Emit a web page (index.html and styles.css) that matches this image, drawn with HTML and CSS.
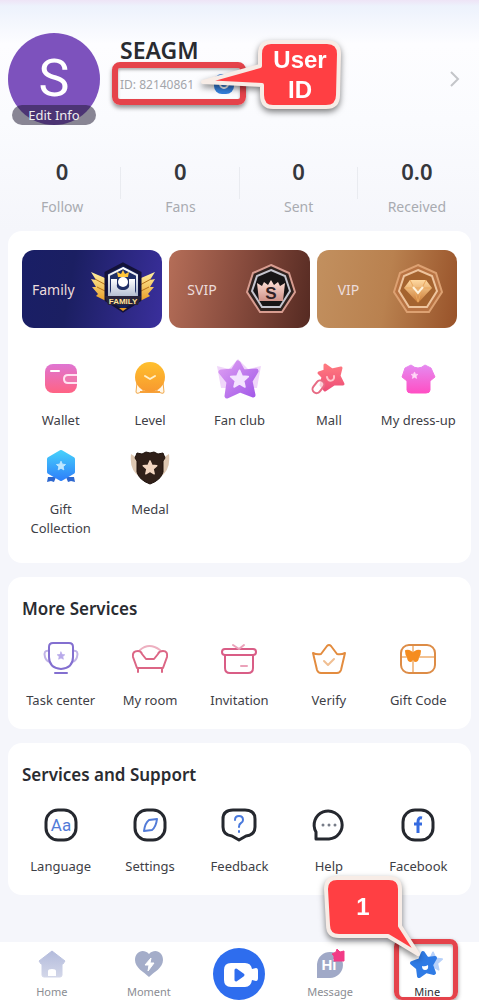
FILE: index.html
```
<!DOCTYPE html>
<html lang="en">
<head>
    <meta charset="UTF-8">
    <meta name="viewport" content="width=device-width, initial-scale=1.0">
    <title>Mine</title>
    <link rel="stylesheet" href="styles.css">
</head>
<body>

    <!-- shared shapes and gradients -->
    <svg class="defs" width="0" height="0" aria-hidden="true">
        <defs>
            <symbol id="star" viewBox="0 0 40 40">
                <path d="M20 4l4.4 9.9 10.8 1.2-8.1 7.2 2.3 10.6-9.4-5.4-9.4 5.4 2.3-10.6-8.1-7.2 10.8-1.2z" fill="currentColor" stroke="currentColor" stroke-width="3" stroke-linejoin="round"/>
            </symbol>
            <linearGradient id="gWallet" x2="0" y2="1"><stop stop-color="#df75d2"/><stop offset="1" stop-color="#ff6384"/></linearGradient>
            <linearGradient id="gLevel" x2="0" y2="1"><stop stop-color="#ffc02e"/><stop offset="1" stop-color="#f8992f"/></linearGradient>
            <linearGradient id="gFan" x2="1" y2="1"><stop stop-color="#dc9cf2"/><stop offset="1" stop-color="#a35ae8"/></linearGradient>
            <linearGradient id="gMall" x2="0" y2="1"><stop stop-color="#ff7a80"/><stop offset="1" stop-color="#ee4f78"/></linearGradient>
            <linearGradient id="gDress" x2="0" y2="1"><stop stop-color="#e58af0"/><stop offset="1" stop-color="#ff4fc4"/></linearGradient>
            <linearGradient id="gGift" x2="0" y2="1"><stop stop-color="#45cdfb"/><stop offset="1" stop-color="#2f83fa"/></linearGradient>
            <linearGradient id="gGold" x2="0" y2="1"><stop stop-color="#fff0a0"/><stop offset="1" stop-color="#e79a22"/></linearGradient>
            <linearGradient id="gSilver" x2="0" y2="1"><stop stop-color="#ffffff"/><stop offset="1" stop-color="#a9b4cb"/></linearGradient>
            <linearGradient id="gRose" x2="0" y2="1"><stop stop-color="#ffe3da"/><stop offset="1" stop-color="#cf9288"/></linearGradient>
            <linearGradient id="gGem" x2="0" y2="1"><stop stop-color="#ffd9a0"/><stop offset="1" stop-color="#c97a35"/></linearGradient>
            <linearGradient id="gHome" x2="0" y2="1"><stop stop-color="#b3bbdc"/><stop offset="1" stop-color="#d3d7e9"/></linearGradient>
        </defs>
    </svg>

    <header class="profile">
        <a class="avatar" href="#">
            <span class="letter">S</span>
            <span class="edit">Edit Info</span>
        </a>
        <div class="info">
            <h1 class="name">SEAGM</h1>
            <div class="userid">
                <span>ID: 82140861</span>
                <button class="copy" type="button" aria-label="Copy ID">
                    <svg width="20" height="20" viewBox="0 0 20 20"><rect width="20" height="20" rx="8" fill="#347fdc"/><path d="M6 7v3a4 4 0 0 0 8 0V7" fill="none" stroke="#fff" stroke-width="2"/></svg>
                </button>
                <div class="callout callout-id">
                    <svg width="160" height="90" viewBox="0 0 160 90" aria-hidden="true">
                        <path d="M70 8h56q12 0 12 12l-1 41q0 12-12 12H72q-11 0-11-12V51L2 48l57-16V20q0-12 11-12z" fill="#ff3f43" stroke="#f7ece6" stroke-width="4" stroke-linejoin="round"/>
                    </svg>
                    <strong>User<br>ID</strong>
                </div>
            </div>
        </div>
        <a class="more" href="#" aria-label="Profile">
            <svg width="12" height="20" viewBox="0 0 12 20"><path d="M2 3l7 7-7 7" fill="none" stroke="#c3c5c9" stroke-width="2"/></svg>
        </a>
    </header>

    <ul class="stats">
        <li><b>0</b><span>Follow</span></li>
        <li><b>0</b><span>Fans</span></li>
        <li><b>0</b><span>Sent</span></li>
        <li><b>0.0</b><span>Received</span></li>
    </ul>

    <main>
        <section class="card first">
            <div class="banners">
                <a class="banner family" href="#">
                    <span>Family</span>
                    <svg width="66" height="54" viewBox="0 0 66 54" aria-hidden="true">
                        <path d="M1 10l14 6 3 24-12-6 2-2-6-7 4 0-5-8 5 1zM65 10l-14 6-3 24 12-6-2-2 6-7-4 0 5-8-5 1z" fill="url(#gGold)"/>
                        <path d="M5 17l11 6M7 25l10 5M61 17l-11 6M59 25l-10 5" stroke="#b56f19"/>
                        <path d="M33 2l17 9v27L33 49 16 38V11z" fill="#14205a" stroke="#131238" stroke-width="3"/>
                        <path d="M33 6l14 7v21H19V13z" fill="#1f2f66" stroke="url(#gSilver)" stroke-width="2"/>
                        <path d="M21 17h6v5c-2 8 14 8 12 0v-5h6v12l3 8H18l3-8z" fill="url(#gSilver)"/>
                        <circle cx="33" cy="20" r="5" fill="#fff"/>
                        <path d="M28 15l-1-5 4 2 2-4 2 4 4-2-1 5z" fill="#ffc73c"/>
                        <path d="M15 34h36l-3 9H18z" fill="#282339"/>
                        <path d="M29 46h8l-4 3z" fill="#e79a22"/>
                        <text x="33" y="42" text-anchor="middle" class="badge-text" fill="#ffe29b">FAMILY</text>
                    </svg>
                </a>
                <a class="banner svip" href="#">
                    <span>SVIP</span>
                    <svg width="54" height="54" viewBox="0 0 54 54" aria-hidden="true">
                        <path d="M27 3l18 8 6 19-13 20H16L3 30l6-19z" fill="#31231f" stroke="#d79c90" stroke-width="2"/>
                        <path d="M27 8l14 6 5 15-10 16H18L8 29l5-15z" fill="#171516" stroke="#c5c5ce" stroke-width="2"/>
                        <path d="M15 39l-2-18 5 3 2-4 4 3 3-5 3 5 4-3 2 4 5-3-2 18z" fill="url(#gRose)"/>
                        <text x="27" y="37" text-anchor="middle" class="badge-s" fill="#302125">S</text>
                    </svg>
                </a>
                <a class="banner vip" href="#">
                    <span>VIP</span>
                    <svg width="54" height="54" viewBox="0 0 54 54" aria-hidden="true">
                        <path d="M27 3l18 8 6 19-13 20H16L3 30l6-19z" fill="#b87343" stroke="#dda172" stroke-width="2"/>
                        <path d="M27 8l14 6 5 15-10 16H18L8 29l5-15z" fill="#a4632f" stroke="#eec49d" stroke-width="2"/>
                        <path d="M19 18h16l6 8-14 15-14-15z" fill="url(#gGem)"/>
                        <path d="M14 26h26M19 18l4 8 4 14 4-14 4-8" fill="none" stroke="#e9a65d"/>
                        <path d="M22 25l5 6 5-6" fill="none" stroke="#fff3dc" stroke-width="2"/>
                    </svg>
                </a>
            </div>

            <nav class="grid">
                <a class="item" href="#">
                    <svg class="icon" viewBox="0 0 40 40"><rect x="4" y="5" width="32" height="29" rx="8" fill="url(#gWallet)"/><path d="M10 12h8" stroke="#fff" stroke-width="2" stroke-linecap="round"/><path d="M36 16H27q-4 0-4 4t4 4h9" fill="#ee78b0" stroke="#ffe3f1" stroke-width="2"/></svg>
                    <span>Wallet</span>
                </a>
                <a class="item" href="#">
                    <svg class="icon" viewBox="0 0 40 40"><path d="M7 23l-1 10q0 2 3 1l5-3zM33 23l1 10q0 2-3 1l-5-3z" fill="#fff7e9" stroke="#f2a94c" stroke-linejoin="round"/><path d="M10 33h20" stroke="#f7a23a" stroke-width="2"/><circle cx="20" cy="18" r="15" fill="url(#gLevel)"/><path d="M15 17l5 3 5-3" fill="none" stroke="#fff0c8" stroke-width="2" stroke-linecap="round" stroke-linejoin="round"/></svg>
                    <span>Level</span>
                </a>
                <a class="item" href="#">
                    <svg class="icon icon-wide" viewBox="0 0 48 40"><path d="M2 7l12 3 9-10 10 10 13-3-4 22-36 0z" fill="#f0d6fa"/><path d="M23 4l5 9 13-1-6 10 3 14-13-5-13 6 2-14-8-10 12-1z" fill="url(#gFan)" stroke="url(#gFan)" stroke-width="5" stroke-linejoin="round"/><g color="#f4e4ff"><use href="#star" x="13" y="9" width="23" height="23"/></g></svg>
                    <span>Fan club</span>
                </a>
                <a class="item" href="#">
                    <svg class="icon" viewBox="0 0 40 40"><path d="M16 6l7 5 9-2-2 8 4 8-9 0-9 6-4-5 2-8-4-4 6-2z" fill="url(#gMall)" stroke="url(#gMall)" stroke-width="3" stroke-linejoin="round"/><path d="M18 18c1 6 8 4 7-1" fill="none" stroke="#ffc4cb" stroke-width="2" stroke-linecap="round"/><rect x="6" y="21" width="8" height="14" rx="4" transform="rotate(38 10 27)" fill="#fff" fill-opacity=".7" stroke="#e76b84" stroke-width="2"/></svg>
                    <span>Mall</span>
                </a>
                <a class="item" href="#">
                    <svg class="icon" viewBox="0 0 40 40"><path d="M13 6q7 6 14 0l6 3 4 9-5 4v9q0 3-4 3H13q-4 0-4-3v-9l-5-4 3-9z" fill="url(#gDress)" stroke="url(#gDress)" stroke-linejoin="round"/><g color="#ffd9f7"><use href="#star" x="12" y="12" width="9" height="9"/></g></svg>
                    <span>My dress-up</span>
                </a>
                <a class="item" href="#">
                    <svg class="icon" viewBox="0 0 40 40"><path d="M7 29h8l-2 5-3-1-4 1zM33 29h-8l2 5 3-1 4 1z" fill="#2d67cf"/><path d="M20 4l12 7v13l-12 7-12-7V11z" fill="url(#gGift)" stroke="url(#gGift)" stroke-width="4" stroke-linejoin="round"/><g color="#bfe8ff"><use href="#star" x="14" y="12" width="12" height="12"/></g></svg>
                    <span>Gift Collection</span>
                </a>
                <a class="item" href="#">
                    <svg class="icon" viewBox="0 0 40 40"><path d="M1 6q6 4 8 5l1 18Q-1 22 1 6zM39 6q-6 4-8 5l-1 18Q41 22 39 6z" fill="#dfc8b2"/><path d="M7 5l5 1 4-2 4 1 4-1 4 2 5-1 2 5-2 3v11q-2 8-13 12Q9 32 7 24V13l-2-3z" fill="#302019" stroke="#20130d" stroke-linejoin="round"/><g color="#f3d6c1"><use href="#star" x="11" y="11" width="18" height="18"/></g></svg>
                    <span>Medal</span>
                </a>
            </nav>
        </section>

        <section class="card">
            <h2>More Services</h2>
            <nav class="grid">
                <a class="item" href="#">
                    <svg class="icon line" viewBox="0 0 40 40" stroke="#836fd0"><path d="M8 12q-6-1-4 6 1 4 5 5M32 12q6-1 4 6-1 4-5 5" stroke="#c0b3e7"/><path d="M12 4h16q4 0 4 4v10q0 11-12 12Q8 29 8 18V8q0-4 4-4zM14 34h12"/><g color="#b8a9ea"><use href="#star" x="15" y="12" width="10" height="10" stroke="none"/></g></svg>
                    <span>Task center</span>
                </a>
                <a class="item" href="#">
                    <svg class="icon line" viewBox="0 0 40 40" stroke="#dc6685"><path d="M10 11q9-8 20 0" stroke="#edb0c0"/><path d="M7 29L3 18q-1-6 5-6 3 0 4 3l4 5h8l4-5q1-3 5-3 5 0 4 6l-4 11zM8 29v4M32 29v4"/></svg>
                    <span>My room</span>
                </a>
                <a class="item" href="#">
                    <svg class="icon line" viewBox="0 0 40 40" stroke="#d95d86"><rect x="3" y="10" width="34" height="6" rx="3"/><path d="M6 16v13q0 5 5 5h18q5 0 5-5V16"/><path d="M14 6l6 4 5-4M22 27h6" stroke="#eba2ba"/></svg>
                    <span>Invitation</span>
                </a>
                <a class="item" href="#">
                    <svg class="icon line" viewBox="0 0 40 40" stroke="#e38c3f"><path d="M4 14q4 2 8 1l6-8q2-2 4 0l6 8q4 1 8-1l-4 17q-1 3-4 3H12q-3 0-4-3z"/><path d="M15 22l4 4 6-6" stroke="#f0bf93"/></svg>
                    <span>Verify</span>
                </a>
                <a class="item" href="#">
                    <svg class="icon line" viewBox="0 0 40 40" stroke="#dd8c46"><path d="M15 6v27M3 18h34" stroke="#f2c292"/><rect x="3" y="6" width="34" height="28" rx="8"/><path d="M15 15q-3-4-7-3 0 4 2 6 0 4 3 4l2-3 2 3q3 0 3-4 2-2 2-6-4-1-7 3z" fill="#f58d20" stroke="#f58d20"/></svg>
                    <span>Gift Code</span>
                </a>
            </nav>
        </section>

        <section class="card">
            <h2>Services and Support</h2>
            <nav class="grid">
                <a class="item" href="#">
                    <svg class="icon line dark" viewBox="0 0 40 40"><rect x="5" y="5" width="30" height="30" rx="12"/><text x="20" y="26" text-anchor="middle" class="glyph-aa">Aa</text></svg>
                    <span>Language</span>
                </a>
                <a class="item" href="#">
                    <svg class="icon line dark" viewBox="0 0 40 40"><rect x="5" y="5" width="30" height="30" rx="12"/><path d="M27 14l-8 1q-4 3-5 11l8-1q4-3 5-11z" stroke="#527bd8" stroke-width="2"/></svg>
                    <span>Settings</span>
                </a>
                <a class="item" href="#">
                    <svg class="icon line dark" viewBox="0 0 40 40"><path d="M14 5h12q10 0 10 9v8q0 8-9 9l-7 4-7-4q-9-1-9-9v-8q0-9 10-9z"/><path d="M16 15q0-4 4-4t4 4q0 2-2 3-2 1-2 4M20 26v1" stroke="#4979dc" stroke-width="2"/></svg>
                    <span>Feedback</span>
                </a>
                <a class="item" href="#">
                    <svg class="icon line dark" viewBox="0 0 40 40"><path d="M7 34v-7A14 14 0 1 1 20 34z"/><g fill="#777c88" stroke="none"><circle cx="14" cy="20" r="1.5"/><circle cx="20" cy="20" r="1.5"/><circle cx="26" cy="20" r="1.5"/></g></svg>
                    <span>Help</span>
                </a>
                <a class="item" href="#">
                    <svg class="icon line dark" viewBox="0 0 40 40"><rect x="5" y="5" width="30" height="30" rx="12"/><path d="M24 13q-4-1-4 4v11M16 19h8" stroke="#356be0" stroke-width="3" stroke-linecap="butt"/></svg>
                    <span>Facebook</span>
                </a>
            </nav>
        </section>
    </main>

    <nav class="tabbar">
        <a class="tab" href="#">
            <svg width="32" height="32" viewBox="0 0 32 32"><path d="M16 3l13 10-2 3h-1v11q0 2-2 2H8q-2 0-2-2V16H5l-2-3z" fill="url(#gHome)" stroke="url(#gHome)" stroke-linejoin="round"/><path d="M12 28v-5q0-2 4-2t4 2v5z" fill="#fff"/></svg>
            <span>Home</span>
        </a>
        <a class="tab" href="#">
            <svg width="32" height="32" viewBox="0 0 32 32"><path d="M16 6C10 0 2 4 2 12c0 8 9 12 14 17 5-5 14-9 14-17C30 4 22 0 16 6z" fill="#a4adc9"/><path d="M18 10l-6 7h4l-1 6 6-8h-4z" fill="#fff" stroke="#fff" stroke-linejoin="round"/></svg>
            <span>Moment</span>
        </a>
        <a class="live" href="#" aria-label="Go live">
            <svg width="52" height="52" viewBox="0 0 52 52"><circle cx="26" cy="26" r="26" fill="#2e6dee"/><path d="M18 15h14q6 0 7 6l4-1q2 0 2 3v7q0 3-2 3l-4-1q-1 7-7 7H18q-7 0-7-7V22q0-7 7-7z" fill="#fff"/><path d="M23 22l7 5-7 5z" fill="#2e6dee" stroke="#2e6dee" stroke-width="3" stroke-linejoin="round"/></svg>
        </a>
        <a class="tab" href="#">
            <svg width="32" height="32" viewBox="0 0 32 32"><path d="M3 30V16A13 13 0 1 1 16 30z" fill="#a0a9c7"/><text x="15" y="22" text-anchor="middle" class="glyph-hi">Hi</text><path d="M23 1l3 3 4-1 0 5 0 5-5 0-5 0 0-5-2-2 4-2z" fill="#f23b86" stroke="#f23b86" stroke-linejoin="round"/></svg>
            <span>Message</span>
        </a>
        <a class="tab active" href="#">
            <svg width="36" height="32" viewBox="0 0 36 32"><g color="#b7d1fa"><use href="#star" x="12" y="1" width="24" height="26"/></g><path d="M14 5l4 6 8-1-4 7 3 8-8-2-7 5-1-8-6-5 8-3z" fill="#2f7be5" stroke="#2f7be5" stroke-width="4" stroke-linejoin="round"/><path d="M13 18q3 1 6-1 1 5-3 5-3 0-3-4z" fill="#fff"/></svg>
            <span>Mine</span>
            <div class="callout callout-mine">
                <svg width="106" height="86" viewBox="0 0 106 86" aria-hidden="true">
                    <path d="M17 5h52q11 0 11 11v37l18 28-30-18H19Q8 63 8 52L6 16Q6 5 17 5z" fill="#ff3f43" stroke="#f7ece6" stroke-width="4" stroke-linejoin="round"/>
                </svg>
                <strong>1</strong>
            </div>
        </a>
    </nav>

</body>
</html>
```
FILE: styles.css
```
*, *::before{padding: 0; margin: 0; box-sizing: border-box;}
ul, li{list-style: none;}
a{color: inherit; text-decoration: none;}
svg{display: block;}
body{display: flex; flex-direction: column; min-height: 100vh; font-family: "Noto Sans", sans-serif; font-size: 13px; color: #3e4046; background: linear-gradient(#eee4f6 0, #edf2fc 6px, #fdfdff 44px, #fafbfe 120px, #f5f6fb 230px, #f5f6fb 100%);}
.defs{position: absolute;}

/* profile */
.profile{display: flex; align-items: flex-start; padding: 33px 18px 0 8px;}
.avatar{position: relative; display: flex; align-items: center; justify-content: center; width: 92px; height: 92px; border-radius: 50%; background: #7d52bd;}
.avatar .letter{font-family: Roboto, sans-serif; font-size: 52px; line-height: 48px; color: #fff;}
.avatar .edit{position: absolute; left: 4px; right: 4px; bottom: 0; border-radius: 10px; font-size: 13px; line-height: 20px; text-align: center; color: #eee; background: rgba(30, 25, 50, .52);}
.info{flex: 1; padding-left: 20px;}
.name{font-size: 23px; line-height: 34px; font-weight: 600; color: #292b30;}
.userid{position: relative; display: inline-flex; align-items: center; gap: 20px; height: 34px; font-size: 12px; color: #a3a5aa;}
.userid::before{content: ""; position: absolute; inset: -5px -12px -4px -8px; border: 6px solid #e5434b; border-radius: 8px; box-shadow: 0 3px 4px rgba(0, 0, 0, .4), inset 0 2px 3px rgba(0, 0, 0, .3);}
.copy{border: 0; background: none;}
.more{align-self: center;}

.callout{position: absolute; filter: drop-shadow(0 3px 3px rgba(0, 0, 0, .5));}
.callout strong{position: absolute; font-family: "Liberation Sans", sans-serif; font-size: 24px; line-height: 30px; text-align: center; color: #fff;}
.callout-id{left: 81px; top: -33px;}
.callout-id strong{left: 60px; top: 11px; width: 78px;}

/* counters */
.stats{display: grid; grid-template-columns: repeat(4, 1fr); padding: 30px 3px 14px;}
.stats li{display: flex; flex-direction: column; align-items: center; gap: 10px; background: linear-gradient(#e9ebf0, #e9ebf0) right 12px / 1px 32px no-repeat;}
.stats li:last-child{background: none;}
.stats b{font-size: 22px; line-height: 32px; font-weight: 600; color: #35373c;}
.stats span{font-size: 14px; line-height: 20px; color: #a9abb1;}

/* cards */
main{display: flex; flex-direction: column; gap: 14px; padding: 0 8px;}
.card{padding: 20px 8px 19px; border-radius: 14px; background: #fff;}
.card.first{padding: 19px 8px 25px;}
.card h2{padding: 0 6px; margin-bottom: 18px; font-size: 17px; line-height: 24px; font-weight: 600; color: #2a2c31;}
.banners{display: grid; grid-template-columns: repeat(3, 1fr); gap: 7px; padding: 0 6px; margin-bottom: 31px;}
.banner{display: flex; align-items: center; justify-content: space-between; height: 78px; border-radius: 12px; font-size: 14px; color: #ecdcdc;}
.family{padding: 0 6px 0 10px; background: linear-gradient(100deg, #191e66, #1b1f62 35%, #3a2f9c);}
.svip{padding: 0 12px 0 18px; background: linear-gradient(100deg, #b56e58, #874b3d 50%, #552a22);}
.vip{padding: 0 12px 0 21px; background: linear-gradient(100deg, #c2905f, #b9814f 50%, #985229);}
.badge-text{font-family: "Liberation Sans", sans-serif; font-size: 8px; font-weight: bold;}
.badge-s{font-family: "Liberation Sans", sans-serif; font-size: 17px; font-weight: bold;}

.grid{display: grid; grid-template-columns: repeat(5, 1fr); row-gap: 18px;}
.item{display: flex; flex-direction: column; align-items: center; gap: 12px; padding: 0 4px; line-height: 19px; text-align: center;}
.icon{width: 40px; height: 40px;}
.icon-wide{width: 48px;}
.line{fill: none; stroke-width: 2; stroke-linecap: round; stroke-linejoin: round;}
.dark{stroke: #25282f; stroke-width: 3;}
.glyph-aa{font-family: Roboto, sans-serif; font-size: 17px; fill: #527bd8; stroke: none;}

/* bottom bar */
.tabbar{display: grid; grid-template-columns: 8fr 7fr 7fr 7fr 8fr; margin-top: auto; height: 58px; padding-top: 6px; background: #fff;}
.tab{position: relative; display: flex; flex-direction: column; align-items: center; gap: 4px; font-size: 11px; line-height: 16px; color: #8b8d93;}
.tab.active{color: #2c2e35;}
.live{justify-self: center;}
.glyph-hi{font-family: "Liberation Sans", sans-serif; font-size: 15px; font-weight: bold; fill: #fff;}
.tab.active::before{content: ""; position: absolute; top: -9px; bottom: 0; left: 50%; width: 64px; margin-left: -33px; border: 5px solid #e5434b; border-bottom-width: 3px; border-radius: 8px; box-shadow: 0 2px 4px rgba(0, 0, 0, .4), inset 0 2px 3px rgba(0, 0, 0, .3);}
.callout-mine{right: 53px; bottom: 41px;}
.callout-mine strong{left: 7px; top: 19px; width: 72px;}
```
